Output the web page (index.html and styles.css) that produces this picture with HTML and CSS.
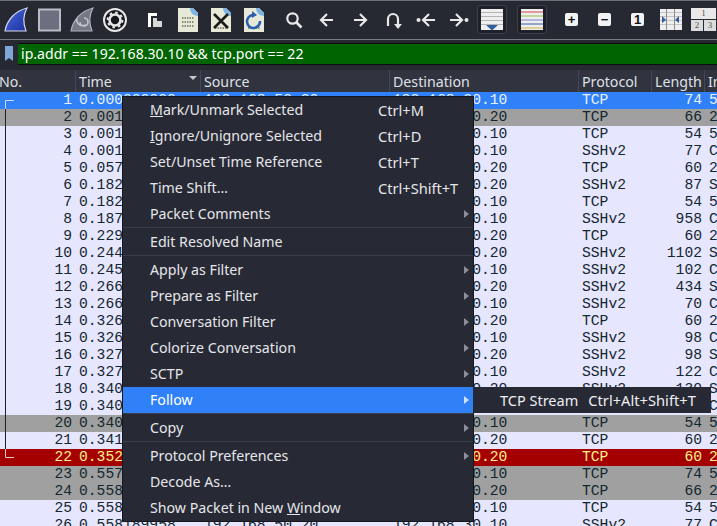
FILE: index.html
```html
<!DOCTYPE html>
<html lang="en">
<head>
  <meta charset="UTF-8">
  <title>Wireshark packet list</title>
  <link rel="stylesheet" href="styles.css">
</head>
<body>
  <div class="toolbar">
    <span class="tb first"><svg width="26" height="26" viewBox="0 0 26 26"><defs><linearGradient id="fin" x1="0" y1="0" x2="1" y2="1"><stop offset="0" stop-color="#4a6ae0"/><stop offset="1" stop-color="#1c2f9c"/></linearGradient></defs><path d="M2 24C4 13 12 4 24 1C20 8 20 16 23 24Z" fill="url(#fin)" stroke="#d5d8ea" stroke-width="1.2"/></svg></span>
    <span class="tb"><svg width="26" height="26" viewBox="0 0 26 26"><rect x="3" y="2.5" width="21" height="21" fill="#6d6f80" stroke="#b9bbc6" stroke-width="2"/></svg></span>
    <span class="tb"><svg width="26" height="26" viewBox="0 0 26 26"><path d="M2 24C4 13 12 4 24 1C20 8 20 16 23 24Z" fill="#767884" stroke="#aeb0ba" stroke-width="1.2"/><path d="M11 15a4 4 0 1 0 4-4M17 18c-5 2-10-1-9-6" fill="none" stroke="#c4c6ce" stroke-width="1.6"/></svg></span>
    <span class="tb"><svg width="26" height="26" viewBox="0 0 26 26"><circle cx="13" cy="13" r="11" fill="#16171d" stroke="#e8e8e8" stroke-width="2"/><circle cx="13" cy="13" r="5.5" fill="none" stroke="#e8e8e8" stroke-width="2.6"/><circle cx="13" cy="13" r="7.4" fill="none" stroke="#e8e8e8" stroke-width="2" stroke-dasharray="2.6 3.2"/></svg></span>
    <span class="tb sep"><svg width="26" height="26" viewBox="0 0 26 26"><path d="M6 6H15V9H9V20H6Z" fill="#fff"/><path d="M11 11H15V14H20V20H11Z" fill="#d8d8d8"/></svg></span>
    <span class="tb"><svg width="26" height="26" viewBox="0 0 26 26"><path d="M3 1H18L23 6V25H3Z" fill="#e6e8d8"/><path d="M15 1H18L23 6V9C19 9 15 6 15 1Z" fill="#7cb4e4"/><path d="M7 11H19M7 15H19M7 19H19" stroke="#8a8c78" stroke-width="2" stroke-dasharray="1.5 1"/></svg></span>
    <span class="tb"><svg width="26" height="26" viewBox="0 0 26 26"><path d="M3 1H18L23 6V25H3Z" fill="#e6e8d8"/><path d="M15 1H18L23 6V9C19 9 15 6 15 1Z" fill="#7cb4e4"/><path d="M7 21H19" stroke="#8a8c78" stroke-width="2" stroke-dasharray="1.5 1"/><path d="M6 7L20 21M20 7L6 21" stroke="#1b1b1b" stroke-width="2.6"/></svg></span>
    <span class="tb"><svg width="26" height="26" viewBox="0 0 26 26"><path d="M3 1H18L23 6V25H3Z" fill="#e6e8d8"/><path d="M15 1H18L23 6V9C19 9 15 6 15 1Z" fill="#7cb4e4"/><path d="M7 21H19" stroke="#8a8c78" stroke-width="2" stroke-dasharray="1.5 1"/><path d="M12 8A6.5 6.5 0 1 0 19 14" fill="none" stroke="#2a5cb0" stroke-width="2.6"/><path d="M11 4L16 8L11 11Z" fill="#2a5cb0"/></svg></span>
    <span class="tb sep"><svg width="26" height="26" viewBox="0 0 26 26"><circle cx="11.5" cy="11.5" r="5.2" fill="none" stroke="#e8e8e8" stroke-width="2.2"/><path d="M15.5 15.5L20.5 20.5" stroke="#e8e8e8" stroke-width="2.6"/></svg></span>
    <span class="tb"><svg width="26" height="26" viewBox="0 0 26 26"><path d="M19 13H8M13 7L7 13L13 19" fill="none" stroke="#e8e8e8" stroke-width="2.2"/></svg></span>
    <span class="tb"><svg width="26" height="26" viewBox="0 0 26 26"><path d="M7 13H18M13 7L19 13L13 19" fill="none" stroke="#e8e8e8" stroke-width="2.2"/></svg></span>
    <span class="tb"><svg width="26" height="26" viewBox="0 0 26 26"><path d="M8 19V12A5 5 0 0 1 18 12V18" fill="none" stroke="#e8e8e8" stroke-width="2.2"/><path d="M14 17H22L18 22Z" fill="#e8e8e8"/></svg></span>
    <span class="tb"><svg width="26" height="26" viewBox="0 0 26 26"><circle cx="5.5" cy="13" r="2" fill="#e8e8e8"/><path d="M22 13H11M16 7L10 13L16 19" fill="none" stroke="#e8e8e8" stroke-width="2.2"/></svg></span>
    <span class="tb"><svg width="26" height="26" viewBox="0 0 26 26"><circle cx="20.5" cy="13" r="2" fill="#e8e8e8"/><path d="M4 13H15M10 7L16 13L10 19" fill="none" stroke="#e8e8e8" stroke-width="2.2"/></svg></span>
    <span class="tb"><span class="tb-btn"><svg width="22" height="22" viewBox="0 0 22 22"><rect width="22" height="21" fill="#eeeeee"/><path d="M0 3.5H22M0 7.5H22M0 11.5H22M0 15.5H22" stroke="#b4b4b4"/><path d="M5 16H17L11 21.5Z" fill="#2f5f9e"/></svg></span></span>
    <span class="tb sep"><span class="tb-btn"><svg width="22" height="22" viewBox="0 0 22 22"><rect width="22" height="21" fill="#eeeeee"/><path d="M0 3H22" stroke="#d9444a"/><path d="M0 7H22" stroke="#8fc04a"/><path d="M0 11H22" stroke="#7d7dd0"/><path d="M0 15H22" stroke="#3b5fa0"/><path d="M0 19H22" stroke="#d0b040"/></svg></span></span>
    <span class="tb sep"><span class="zoom-key">+</span></span>
    <span class="tb"><span class="zoom-key">&minus;</span></span>
    <span class="tb"><span class="zoom-key">1</span></span>
    <span class="tb"><svg width="22" height="22" viewBox="0 0 22 22"><rect width="22" height="21" fill="#eeeeee"/><path d="M0 3.5H22M0 7.5H22M0 11.5H22M0 15.5H22" stroke="#c4c4c4"/><path d="M6.5 0V21M14.5 0V21" stroke="#8d8d8d"/><path d="M2 7L6 11L2 14ZM19 7L15 11L19 14Z" fill="#2f5f9e"/></svg></span>
    <span class="tb"><span class="panes"><span class="pane pane-top">1</span><span class="pane">2</span><span class="pane">3</span></span></span>
  </div>

  <div class="filter-bar">
    <span class="bookmark"><svg width="10" height="16" viewBox="0 0 10 16"><path d="M1 0H9V15L5 12L1 15Z" fill="#7fa6d6"/></svg></span>
    <div class="filter-input">ip.addr == 192.168.30.10 &amp;&amp; tcp.port == 22</div>
  </div>

  <div class="cols head">
    <span class="h-no">No.</span>
    <span class="h-time">Time</span>
    <span>Source</span>
    <span>Destination</span>
    <span>Protocol</span>
    <span>Length</span>
    <span>Info</span>
  </div>

  <div class="list">
    <div class="cols row sel"><span>1</span><span>0.000000000</span><span>192.168.50.20</span><span>192.168.30.10</span><span>TCP</span><span>74</span><span>5</span></div>
    <div class="cols row gray"><span>2</span><span>0.001</span><span>192.168.30.10</span><span>192.168.50.20</span><span>TCP</span><span>66</span><span>2</span></div>
    <div class="cols row"><span>3</span><span>0.001</span><span>192.168.50.20</span><span>192.168.30.10</span><span>TCP</span><span>54</span><span>5</span></div>
    <div class="cols row"><span>4</span><span>0.001</span><span>192.168.50.20</span><span>192.168.30.10</span><span>SSHv2</span><span>77</span><span>C</span></div>
    <div class="cols row"><span>5</span><span>0.057</span><span>192.168.30.10</span><span>192.168.50.20</span><span>TCP</span><span>60</span><span>2</span></div>
    <div class="cols row"><span>6</span><span>0.182</span><span>192.168.30.10</span><span>192.168.50.20</span><span>SSHv2</span><span>87</span><span>S</span></div>
    <div class="cols row"><span>7</span><span>0.182</span><span>192.168.50.20</span><span>192.168.30.10</span><span>TCP</span><span>54</span><span>5</span></div>
    <div class="cols row"><span>8</span><span>0.187</span><span>192.168.50.20</span><span>192.168.30.10</span><span>SSHv2</span><span>958</span><span>C</span></div>
    <div class="cols row"><span>9</span><span>0.229</span><span>192.168.30.10</span><span>192.168.50.20</span><span>TCP</span><span>60</span><span>2</span></div>
    <div class="cols row"><span>10</span><span>0.244</span><span>192.168.30.10</span><span>192.168.50.20</span><span>SSHv2</span><span>1102</span><span>S</span></div>
    <div class="cols row"><span>11</span><span>0.245</span><span>192.168.50.20</span><span>192.168.30.10</span><span>SSHv2</span><span>102</span><span>C</span></div>
    <div class="cols row"><span>12</span><span>0.266</span><span>192.168.30.10</span><span>192.168.50.20</span><span>SSHv2</span><span>434</span><span>S</span></div>
    <div class="cols row"><span>13</span><span>0.266</span><span>192.168.50.20</span><span>192.168.30.10</span><span>SSHv2</span><span>70</span><span>C</span></div>
    <div class="cols row"><span>14</span><span>0.326</span><span>192.168.30.10</span><span>192.168.50.20</span><span>TCP</span><span>60</span><span>2</span></div>
    <div class="cols row"><span>15</span><span>0.326</span><span>192.168.50.20</span><span>192.168.30.10</span><span>SSHv2</span><span>98</span><span>C</span></div>
    <div class="cols row"><span>16</span><span>0.327</span><span>192.168.30.10</span><span>192.168.50.20</span><span>SSHv2</span><span>98</span><span>S</span></div>
    <div class="cols row"><span>17</span><span>0.327</span><span>192.168.50.20</span><span>192.168.30.10</span><span>SSHv2</span><span>122</span><span>C</span></div>
    <div class="cols row"><span>18</span><span>0.340</span><span>192.168.30.10</span><span>192.168.50.20</span><span>SSHv2</span><span>130</span><span>S</span></div>
    <div class="cols row"><span>19</span><span>0.340</span><span>192.168.50.20</span><span>192.168.30.10</span><span>SSHv2</span><span>70</span><span>C</span></div>
    <div class="cols row gray"><span>20</span><span>0.340</span><span>192.168.50.20</span><span>192.168.30.10</span><span>TCP</span><span>54</span><span>5</span></div>
    <div class="cols row"><span>21</span><span>0.341</span><span>192.168.30.10</span><span>192.168.50.20</span><span>TCP</span><span>60</span><span>2</span></div>
    <div class="cols row bad"><span>22</span><span>0.352</span><span>192.168.30.10</span><span>192.168.50.20</span><span>TCP</span><span>60</span><span>2</span></div>
    <div class="cols row gray"><span>23</span><span>0.557</span><span>192.168.50.20</span><span>192.168.30.10</span><span>TCP</span><span>74</span><span>5</span></div>
    <div class="cols row gray"><span>24</span><span>0.558</span><span>192.168.30.10</span><span>192.168.50.20</span><span>TCP</span><span>66</span><span>2</span></div>
    <div class="cols row"><span>25</span><span>0.558</span><span>192.168.50.20</span><span>192.168.30.10</span><span>TCP</span><span>54</span><span>5</span></div>
    <div class="cols row"><span>26</span><span>0.558189958</span><span>192.168.50.20</span><span>192.168.30.10</span><span>SSHv2</span><span>77</span><span>C</span></div>

    <svg class="conv-line" width="16" height="370" viewBox="0 0 16 370">
      <path d="M5.5 9V357" stroke="#1c2230" fill="none"/>
      <path d="M5.5 8.5H14M5.5 8.5V17" stroke="#c9d8f5" fill="none"/>
      <path d="M5.5 357V365.5H14" stroke="#e8c8c8" fill="none"/>
    </svg>

    <div class="menu">
      <div class="item"><span><u>M</u>ark/Unmark Selected</span><span class="accel">Ctrl+M</span></div>
      <div class="item"><span><u>I</u>gnore/Unignore Selected</span><span class="accel">Ctrl+D</span></div>
      <div class="item"><span>Set/Unset Time Reference</span><span class="accel">Ctrl+T</span></div>
      <div class="item"><span>Time Shift…</span><span class="accel">Ctrl+Shift+T</span></div>
      <div class="item more"><span>Packet Comments</span></div>
      <div class="line"></div>
      <div class="item"><span>Edit Resolved Name</span></div>
      <div class="line"></div>
      <div class="item more"><span>Apply as Filter</span></div>
      <div class="item more"><span>Prepare as Filter</span></div>
      <div class="item more"><span>Conversation Filter</span></div>
      <div class="item more"><span>Colorize Conversation</span></div>
      <div class="item more"><span>SCTP</span></div>
      <div class="item more active"><span>Follow</span></div>
      <div class="line"></div>
      <div class="item more"><span>Copy</span></div>
      <div class="line"></div>
      <div class="item more"><span>Protocol Preferences</span></div>
      <div class="item"><span>Decode As…</span></div>
      <div class="item"><span>Show Packet in New <u>W</u>indow</span></div>
    </div>

    <div class="submenu">
      <span>TCP Stream</span><span class="sub-accel">Ctrl+Alt+Shift+T</span>
    </div>
  </div>
</body>
</html>
```

FILE: styles.css
```css
html, body { margin: 0; padding: 0; height: 526px; overflow: hidden; }
body { background: #262832; font-family: "Noto Sans", sans-serif; color: #e8e8ec; }

.toolbar { display: flex; align-items: center; height: 37px; padding-bottom: 1px; border-top: 1px solid #6c6e78; border-bottom: 1px solid #777983; background: #262832; }
.tb { flex: none; width: 33px; display: flex; justify-content: center; align-items: center; }
.tb.first { margin-left: -1px; }
.tb.sep { margin-left: 7px; }
.tb-btn { display: flex; justify-content: center; width: 28px; height: 27px; align-items: center; border: 1px solid #3c3e4a; border-radius: 3px; background: #1f2029; }
.zoom-key { width: 13px; height: 13px; border-radius: 2px; background: #f2f2f2; color: #111; font: bold 13px/13px "Liberation Sans", sans-serif; text-align: center; }
.panes { display: grid; grid-template-columns: 12px 12px; grid-template-rows: 11px 11px; gap: 1px; width: 25px; flex: none; }
.pane { background: #dcdcdc; color: #555; font: 9px/11px "Liberation Serif", serif; text-align: center; }
.pane-top { grid-column: 1 / 3; background: #e8e8e8; }

.filter-bar { display: flex; height: 22px; margin-top: 3px; }
.bookmark { display: flex; justify-content: center; align-items: center; width: 18px; flex: none; }
.filter-input { flex: 1; background: #006400; border-top: 1px solid #0c0c0c; border-bottom: 1px solid #0c0c0c; padding-left: 3px; color: #fff; font-size: 14.1px; line-height: 20px; white-space: nowrap; }

.cols { display: grid; grid-template-columns: 75px 125px 189px 189px 73px 53px 13px; }
.head { height: 22px; margin-top: 5px; background: #31333f; color: #dfe0e6; font-size: 14.2px; line-height: 23px; }
.head span { position: relative; padding-left: 3px; border-left: 1px solid #44465a; white-space: nowrap; overflow: hidden; }
.head .h-no { padding-left: 0; margin-left: -1px; border-left: 0; }
.head .h-time::after { content: ""; position: absolute; right: 3px; top: 6px; border: 4px solid transparent; border-top: 4px solid #c8c9d0; border-bottom: 0; }

.list { position: relative; height: 434px; overflow: hidden; background: #e7e6ff; }
.row { height: 17px; background: #e7e6ff; color: #12272e; font: 14.67px/17px "Liberation Mono", monospace; white-space: nowrap; }
.row span { padding-left: 4px; overflow: hidden; }
.row span:nth-child(1) { padding: 0 3px 0 0; text-align: right; }
.row span:nth-child(6) { padding: 0 2px 0 0; text-align: right; }
.row span:nth-child(7) { padding-left: 5px; overflow: visible; }
.row.sel { background: #3081f7; color: #e8f1ff; }
.row.gray { background: #a0a0a0; }
.row.bad { background: #a40000; color: #fff28c; }

.conv-line { position: absolute; left: 0; top: 0; }

.menu { position: absolute; left: 122px; top: 5px; width: 350px; background: #272a35; border: 1px solid #15161c; border-top: 0; box-shadow: 0 -1px #15161c; font-size: 14.2px; color: #e6e6ea; }
.item { position: relative; display: flex; height: 26px; padding-left: 27px; line-height: 26px; white-space: nowrap; }
.item .accel { position: absolute; left: 255px; font-size: 14.6px; }
.item.more::after { content: ""; position: absolute; left: 341px; top: 9px; border-left: 5px solid #8b8d98; border-top: 4px solid transparent; border-bottom: 4px solid transparent; }
.item.active { background: #3081f7; color: #fff; }
.item.active::after { border-left-color: #cfe0ff; }
.line { height: 1px; margin: 0 0 1px; background: #3b3d49; }

.submenu { position: absolute; left: 473px; top: 295px; display: flex; gap: 10px; width: 211px; height: 26px; padding-left: 27px; background: #272a35; font-size: 14.5px; line-height: 26px; color: #eeeef2; white-space: nowrap; }
.sub-accel { font-size: 14.7px; }
```
